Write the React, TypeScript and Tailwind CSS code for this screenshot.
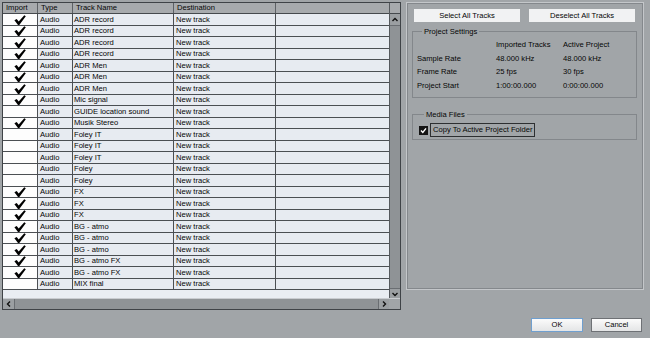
import React from 'react';

const tracks: [string, boolean][] = [
  ['ADR record', true],
  ['ADR record', true],
  ['ADR record', true],
  ['ADR record', true],
  ['ADR Men', true],
  ['ADR Men', true],
  ['ADR Men', true],
  ['Mic signal', true],
  ['GUIDE location sound', false],
  ['Musik Stereo', true],
  ['Foley IT', false],
  ['Foley IT', false],
  ['Foley IT', false],
  ['Foley', false],
  ['Foley', false],
  ['FX', true],
  ['FX', true],
  ['FX', true],
  ['BG - atmo', true],
  ['BG - atmo', true],
  ['BG - atmo', true],
  ['BG - atmo FX', true],
  ['BG - atmo FX', true],
  ['MIX final', false],
];

function Check() {
  return (
    <svg width="12" height="10" viewBox="0 0 12 10">
      <path d="M0.4 5.2 L2.7 4.1 L4.7 6.6 L10.3 0.2 L11.8 1.2 L5.3 9.9 L4 9.9 Z" fill="#000" />
    </svg>
  );
}

function Chevron({ dir }: { dir: 'up' | 'down' | 'left' | 'right' }) {
  const d = {
    up: 'M1.5 5 L4 2.5 L6.5 5',
    down: 'M1.5 3 L4 5.5 L6.5 3',
    left: 'M5 1.5 L2.5 4 L5 6.5',
    right: 'M3 1.5 L5.5 4 L3 6.5',
  }[dir];
  return (
    <svg width="8" height="8" viewBox="0 0 8 8">
      <path d={d} fill="none" stroke="#111" strokeWidth="1.4" />
    </svg>
  );
}

function TrackTable() {
  return (
    <div className="flex h-[308px] w-[399px] flex-col border border-[#3f4347] bg-[#e7ebf1]">
      <div className="flex h-[295px]">
        <div className="flex w-[386px] flex-col">
          <div className="flex h-[11px] shrink-0 border-b border-[#45494d] bg-[#a7aaad] leading-[10px]">
            <div className="w-[35px] border-r border-[#5d6165] pl-[3px]">Import</div>
            <div className="w-[35px] border-r border-[#5d6165] pl-[3px]">Type</div>
            <div className="w-[101px] border-r border-[#5d6165] pl-[3px]">Track Name</div>
            <div className="w-[102px] border-r border-[#5d6165] pl-[3px]">Destination</div>
            <div className="flex-1" />
          </div>
          {tracks.map(([name, on], i) => (
            <div
              key={i}
              className={`flex shrink-0 border-b border-[#4b4f53] ${i % 2 === 0 ? 'h-[12px]' : 'h-[11px]'}`}
            >
              <div className="flex w-[35px] items-center justify-center border-r border-[#4b4f53] bg-[#fdfdfd]">
                {on && <Check />}
              </div>
              <div className="flex w-[35px] items-center border-r border-[#4b4f53] pl-[2px]">Audio</div>
              <div className="flex w-[101px] items-center border-r border-[#4b4f53] pl-[1px]">{name}</div>
              <div className="flex w-[102px] items-center border-r border-[#4b4f53] pl-[2px]">New track</div>
              <div className="flex-1" />
            </div>
          ))}
          <div className="flex-1 bg-[#e9edf2]" />
        </div>
        <div className="flex w-[11px] flex-col border-l border-[#55595d] bg-[#8f9396]">
          <div className="h-[11px] border-b border-[#45494d] bg-[#a7aaad]" />
          <div className="flex h-[12px] items-center justify-center border-b border-[#6a6e72] bg-[#9b9fa2]">
            <Chevron dir="up" />
          </div>
          <div className="flex-1" />
          <div className="flex h-[10px] items-center justify-center border-t border-[#6a6e72] bg-[#9b9fa2]">
            <Chevron dir="down" />
          </div>
        </div>
      </div>
      <div className="flex h-[11px] border-t border-[#c9ccd0]">
        <div className="flex w-[386px] bg-[#8f9396]">
          <div className="flex w-[12px] items-center justify-center border-r border-[#6a6e72] bg-[#9b9fa2]">
            <Chevron dir="left" />
          </div>
          <div className="flex-1" />
          <div className="flex w-[11px] items-center justify-center border-l border-[#6a6e72] bg-[#9b9fa2]">
            <Chevron dir="right" />
          </div>
        </div>
        <div className="flex-1 bg-[#a1a5a8]" />
      </div>
    </div>
  );
}

function SettingsPanel() {
  return (
    <div className="ml-[5px] h-[288px] w-[238px] border border-[#c4c7ca] shadow-[inset_1px_1px_0_#84888c,inset_-1px_-1px_0_#84888c] pl-[6px] pt-[6px]">
      <div className="flex gap-[9px] pl-[1px]">
        <button className="h-[13px] w-[106px] bg-[#f1f2f3] leading-[13px]">Select All Tracks</button>
        <button className="h-[13px] w-[106px] bg-[#f1f2f3] leading-[13px]">Deselect All Tracks</button>
      </div>
      <fieldset className="mt-[5px] w-[225px] -ml-[1px] border border-[#83878b] pb-[5px] pl-[4px] pt-[2px]">
        <legend className="ml-[5px] bg-[#a1a5a8] px-[2px] leading-[9px]">Project Settings</legend>
        <div className="grid grid-cols-[79px_67px_1fr] leading-[13.5px]">
          <div />
          <div>Imported Tracks</div>
          <div>Active Project</div>
          <div>Sample Rate</div>
          <div>48.000 kHz</div>
          <div>48.000 kHz</div>
          <div>Frame Rate</div>
          <div>25 fps</div>
          <div>30 fps</div>
          <div>Project Start</div>
          <div>1:00:00.000</div>
          <div>0:00:00.000</div>
        </div>
      </fieldset>
      <fieldset className="mt-[12px] w-[225px] -ml-[1px] border border-[#83878b] pb-[2px] pl-[6px] pt-[4px]">
        <legend className="ml-[5px] bg-[#a1a5a8] px-[2px] leading-[9px]">Media Files</legend>
        <div className="flex h-[14px] items-center gap-[2px]">
          <div className="flex h-[9px] w-[9px] items-center justify-center bg-[#141414]">
            <svg width="7" height="7" viewBox="0 0 7 7">
              <path d="M1 3.6 L2.8 5.4 L6 1.4" fill="none" stroke="#fff" strokeWidth="1.4" />
            </svg>
          </div>
          <div className="h-[14px] border border-[#2d2f31] px-[2px] leading-[12px]">Copy To Active Project Folder</div>
        </div>
      </fieldset>
    </div>
  );
}

export default function App() {
  return (
    <div className="flex h-[338px] w-[650px] flex-col overflow-hidden bg-[#a1a5a8] font-['Liberation_Sans',Arial,sans-serif] text-[7.6px] text-[#050505]">
      <div className="flex items-start pl-[2px] pt-[2px]">
        <TrackTable />
        <SettingsPanel />
      </div>
      <div className="mt-auto flex justify-end gap-[8px] pb-[6px] pr-[8px]">
        <button className="h-[14px] w-[52px] border border-[#6f9fcf] bg-gradient-to-b from-[#fbfbfb] to-[#e4e5e6] leading-[12px]">OK</button>
        <button className="h-[14px] w-[51px] border border-[#6e7175] bg-gradient-to-b from-[#fbfbfb] to-[#e4e5e6] leading-[12px]">Cancel</button>
      </div>
    </div>
  );
}
